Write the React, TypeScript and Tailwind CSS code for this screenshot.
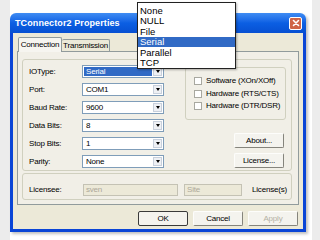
const rows = [
  { label: 'IOType:', value: 'Serial', active: true },
  { label: 'Port:', value: 'COM1' },
  { label: 'Baud Rate:', value: '9600' },
  { label: 'Data Bits:', value: '8' },
  { label: 'Stop Bits:', value: '1' },
  { label: 'Parity:', value: 'None' },
]

const flow = ['Software (XOn/XOff)', 'Hardware (RTS/CTS)', 'Hardware (DTR/DSR)']

const options = ['None', 'NULL', 'File', 'Serial', 'Parallel', 'TCP']

function Combo({ value, active }: { value: string; active?: boolean }) {
  return (
    <div className="w-[82px] h-[13px] border border-[#7f9db9] bg-white flex items-stretch">
      <div className={`flex-1 flex items-center pl-[2px] m-[1px] ${active ? 'bg-[#316ac5] text-white' : 'text-black'}`}>
        {value}
      </div>
      <div className="w-[9px] my-[1px] mr-[1px] bg-[#eef0f4] border border-[#c8d0dc] flex items-center justify-center">
        <div className="w-0 h-0 border-l-[2.5px] border-r-[2.5px] border-t-[3px] border-l-transparent border-r-transparent border-t-black" />
      </div>
    </div>
  )
}

function Btn({ label, bold, disabled }: { label: string; bold?: boolean; disabled?: boolean }) {
  return (
    <div
      className={`w-[50px] h-[15px] flex items-center justify-center rounded-[2px] bg-[#f4f3ee] ${
        bold
          ? 'border border-[#3a3a3a]'
          : 'border border-b-[#85847c] border-r-[#85847c] border-t-[#fdfdfb] border-l-[#fdfdfb]'
      } ${disabled ? 'text-[#b5b2a4]' : 'text-black'}`}
    >
      {label}
    </div>
  )
}

export default function App() {
  return (
    <div className="relative w-[320px] h-[240px] overflow-hidden bg-white flex font-['Liberation_Sans',Arial,sans-serif] text-[8px] tracking-[-0.2px] leading-none">
      <div className="w-[10px] bg-[#ececec]" />

      {/* dialog window */}
      <div className="pt-[13px]">
        <div className="w-[296px] h-[219px] flex flex-col rounded-t-[6px] overflow-hidden shadow-[2px_2px_3px_rgba(0,0,0,0.25)]">
          <div className="h-[20px] shrink-0 bg-gradient-to-b from-[#3f8cf3] via-[#0b5fe3] to-[#0750d2] flex items-center justify-between pl-[5px] pr-[4px]">
            <span className="text-white font-bold text-[9px] tracking-[0.1px]">TConnector2 Properties</span>
            <div className="w-[13px] h-[13px] rounded-[2px] border border-white bg-[#cf6446] flex items-center justify-center">
              <svg width="8" height="8" viewBox="0 0 8 8">
                <path d="M1.5 1.5 L6.5 6.5 M6.5 1.5 L1.5 6.5" stroke="white" strokeWidth="1.6" strokeLinecap="round" />
              </svg>
            </div>
          </div>

          <div className="flex-1 flex flex-col bg-[#ece9d8] border-x-[3px] border-b-[3px] border-[#0a45d6]">
            {/* tabs */}
            <div className="flex items-end h-[18px] pl-[5px]">
              <div className="h-[15px] w-[44px] bg-[#f6f5f0] border border-b-0 border-[#919b9c] rounded-t-[2px] flex items-center justify-center -mb-px relative z-10">
                Connection
              </div>
              <div className="h-[12px] w-[48px] bg-[#ece9d8] border border-b-0 border-l-0 border-[#919b9c] rounded-t-[2px] flex items-center justify-center">
                Transmission
              </div>
            </div>

            {/* tab panel */}
            <div className="mx-[4px] h-[154px] border border-[#919b9c] bg-[#f1efe7] pl-[4px] pt-[7px] flex flex-col">
              <div className="w-[270px] h-[112px] border border-[#d0d0bf] rounded-[3px] flex">
                <div className="w-[142px] pl-[6px] pt-[5px] flex flex-col gap-[5px]">
                  {rows.map((r) => (
                    <div key={r.label} className="flex items-center">
                      <span className="w-[53px]">{r.label}</span>
                      <Combo value={r.value} active={r.active} />
                    </div>
                  ))}
                </div>
                <div className="ml-[20px] flex flex-col">
                  <div className="mt-[7px] w-[101px] h-[53px] border border-[#d0d0bf] rounded-[3px] pl-[8px] pt-[9px] flex flex-col gap-[4.5px]">
                    {flow.map((f) => (
                      <div key={f} className="flex items-center gap-[4px]">
                        <div className="w-[8px] h-[8px] border border-[#a8a8a0] bg-white" />
                        <span>{f}</span>
                      </div>
                    ))}
                  </div>
                  <div className="ml-[49px] mt-[13px] flex flex-col gap-[5px]">
                    <Btn label="About..." />
                    <Btn label="License..." />
                  </div>
                </div>
              </div>

              <div className="mt-[2px] w-[270px] h-[27px] border border-[#d0d0bf] rounded-[3px] flex items-center pl-[6px] pt-[7px]">
                <span className="w-[54px]">Licensee:</span>
                <div className="w-[95px] h-[12px] border border-[#c4c2b4] bg-[#ece9d8] text-[#aca899] pl-[2px] flex items-center">sven</div>
                <div className="ml-[6px] w-[58px] h-[12px] border border-[#c4c2b4] bg-[#ece9d8] text-[#aca899] pl-[2px] flex items-center">Site</div>
                <span className="ml-[10px]">License(s)</span>
              </div>
            </div>

            {/* dialog buttons */}
            <div className="flex justify-end gap-[5px] pr-[5px] pt-[6px]">
              <Btn label="OK" bold />
              <Btn label="Cancel" />
              <Btn label="Apply" disabled />
            </div>
          </div>
        </div>
      </div>

      <div className="w-[6px]" />
      <div className="flex-1 bg-[#ececec]" />

      {/* open IOType drop-down list */}
      <div className="absolute left-[137px] top-[2px] w-[99px] h-[67px] bg-white border border-[#222] text-[9.5px] tracking-normal flex flex-col pt-[2px] shadow-[1px_1px_2px_rgba(0,0,0,0.3)]">
        {options.map((o) => (
          <div
            key={o}
            className={`h-[10.8px] flex items-center pl-[2px] ${o === 'Serial' ? 'bg-[#316ac5] text-white' : 'text-black'}`}
          >
            {o}
          </div>
        ))}
      </div>
    </div>
  )
}
